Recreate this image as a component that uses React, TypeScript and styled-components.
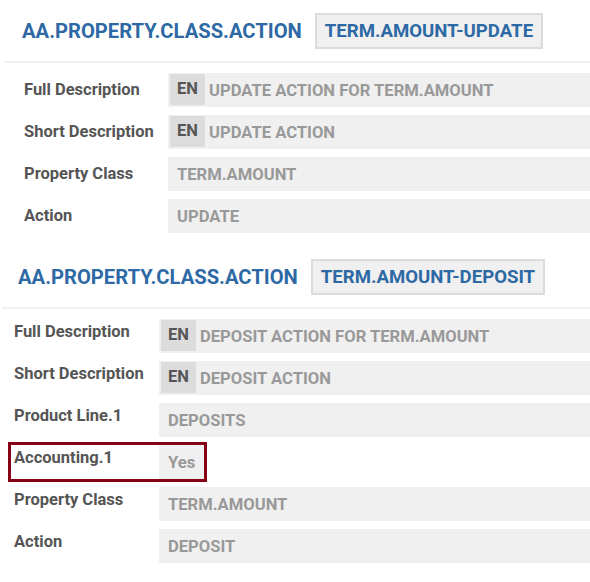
import { createGlobalStyle, styled } from "styled-components";

const GlobalStyle = createGlobalStyle`
  html, body {
    margin: 0;
    padding: 0;
    background: #ffffff;
  }
  body {
    font-family: Roboto, "Liberation Sans", Arial, sans-serif;
    font-weight: 700;
    width: 590px;
    overflow: hidden;
  }
`;

interface Field {
  label: string;
  value: string;
  lang?: boolean;
  highlight?: boolean;
}

interface SectionData {
  title: string;
  code: string;
  titleLeft: number;
  ruleLeft: number;
  labelLeft: number;
  labelWidth: number;
  gapTop: number;
  centered: boolean;
  fields: Field[];
}

const sections: SectionData[] = [
  {
    title: "AA.PROPERTY.CLASS.ACTION",
    code: "TERM.AMOUNT-UPDATE",
    titleLeft: 22,
    ruleLeft: 4,
    labelLeft: 24,
    labelWidth: 144,
    gapTop: 13,
    centered: true,
    fields: [
      { label: "Full Description", value: "UPDATE ACTION FOR TERM.AMOUNT", lang: true },
      { label: "Short Description", value: "UPDATE ACTION", lang: true },
      { label: "Property Class", value: "TERM.AMOUNT" },
      { label: "Action", value: "UPDATE" },
    ],
  },
  {
    title: "AA.PROPERTY.CLASS.ACTION",
    code: "TERM.AMOUNT-DEPOSIT",
    titleLeft: 18,
    ruleLeft: 2,
    labelLeft: 14,
    labelWidth: 145,
    gapTop: 26,
    centered: false,
    fields: [
      { label: "Full Description", value: "DEPOSIT ACTION FOR TERM.AMOUNT", lang: true },
      { label: "Short Description", value: "DEPOSIT ACTION", lang: true },
      { label: "Product Line.1", value: "DEPOSITS" },
      { label: "Accounting.1", value: "Yes", highlight: true },
      { label: "Property Class", value: "TERM.AMOUNT" },
      { label: "Action", value: "DEPOSIT" },
    ],
  },
];

export default function App() {
  return (
    <>
      <GlobalStyle />
      <Page>
        {sections.map((s) => (
          <Section key={s.code} $gapTop={s.gapTop}>
            <Header $left={s.titleLeft}>
              <Title>{s.title}</Title>
              <Code>{s.code}</Code>
            </Header>
            <Rule $left={s.ruleLeft} />
            <Rows>
              {s.fields.map((f) => (
                <Row
                  key={f.label}
                  $left={s.labelLeft}
                  $centered={s.centered}
                  $highlight={!!f.highlight}
                >
                  <Label $width={s.labelWidth} $centered={s.centered}>
                    {f.label}
                  </Label>
                  <Value $fit={!!f.highlight}>
                    {f.lang && <Lang>EN</Lang>}
                    <ValueText $lang={!!f.lang}>{f.value}</ValueText>
                  </Value>
                </Row>
              ))}
            </Rows>
          </Section>
        ))}
      </Page>
    </>
  );
}

const Page = styled.div`
  display: flex;
  flex-direction: column;
  width: 590px;
`;

const Section = styled.section<{ $gapTop: number }>`
  display: flex;
  flex-direction: column;
  padding-top: ${(p) => p.$gapTop}px;
`;

const Header = styled.div<{ $left: number }>`
  display: flex;
  align-items: center;
  gap: 13px;
  padding-left: ${(p) => p.$left}px;
  height: 36px;
`;

const Title = styled.h2`
  margin: 0;
  font-size: 20.2px;
  font-weight: 700;
  color: #2d69a4;
  line-height: 1;
`;

const Code = styled.div`
  box-sizing: border-box;
  height: 36px;
  display: flex;
  align-items: center;
  padding: 0 8px;
  background: #f0f0f0;
  border: 2px solid #dcdcdc;
  color: #2d69a4;
  font-size: 18.6px;
`;

const Rule = styled.div<{ $left: number }>`
  height: 2px;
  background: #f0f0f0;
  margin: 12px 0 10px ${(p) => p.$left}px;
`;

const Rows = styled.div`
  display: flex;
  flex-direction: column;
  gap: 8px;
`;

const Row = styled.div<{ $left: number; $centered: boolean; $highlight: boolean }>`
  display: flex;
  align-items: ${(p) => (p.$centered ? "center" : "flex-start")};
  height: 34px;
  padding-left: ${(p) => (p.$highlight ? 3 : p.$left)}px;
  margin-left: ${(p) => (p.$highlight ? p.$left - 3 : 0)}px;
  width: ${(p) => (p.$highlight ? "fit-content" : "auto")};
  outline: ${(p) => (p.$highlight ? "3px solid #860016" : "none")};
`;

const Label = styled.div<{ $width: number; $centered: boolean }>`
  flex: 0 0 ${(p) => p.$width}px;
  font-size: 16.5px;
  line-height: 20px;
  color: #555555;
  padding-top: ${(p) => (p.$centered ? 0 : 3)}px;
  white-space: nowrap;
`;

const Value = styled.div<{ $fit: boolean }>`
  flex: ${(p) => (p.$fit ? "0 0 auto" : "1 1 auto")};
  align-self: stretch;
  display: flex;
  align-items: center;
  background: #f0f0f0;
  min-width: 0;
`;

const Lang = styled.span`
  align-self: stretch;
  display: flex;
  align-items: center;
  justify-content: center;
  width: 35px;
  margin: 1px 0 2px 2px;
  padding-bottom: 3px;
  box-sizing: border-box;
  background: #dcdcdc;
  color: #555555;
  font-size: 16.5px;
`;

const ValueText = styled.span<{ $lang: boolean }>`
  padding: 0 9px 0 ${(p) => (p.$lang ? 4 : 9)}px;
  font-size: 16.6px;
  color: #999999;
  white-space: nowrap;
`;
